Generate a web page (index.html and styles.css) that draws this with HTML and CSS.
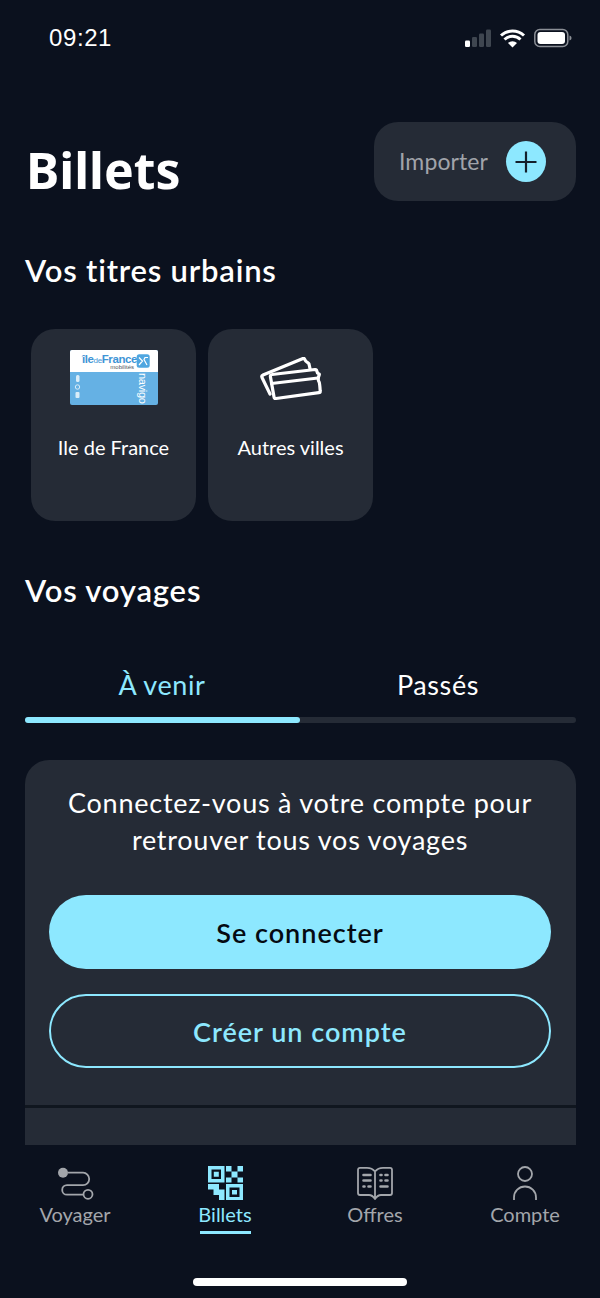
FILE: index.html
```html
<!DOCTYPE html>
<html lang="fr">
<head>
<meta charset="utf-8">
<title>Billets</title>
<link rel="stylesheet" href="styles.css">
</head>
<body>
<div class="screen">
  <div class="status">
    <span class="time">09:21</span>
    <svg class="status-icons" width="110" height="20" viewBox="0 0 110 20">
      <rect x="1" y="12.500" width="5" height="6.500" rx="1.200" fill="#fff"/>
      <rect x="8" y="9" width="5" height="10" rx="1.200" fill="#3f4650"/>
      <rect x="15" y="5.500" width="5" height="13.500" rx="1.200" fill="#3f4650"/>
      <rect x="22" y="1.500" width="5" height="17.500" rx="1.200" fill="#3f4650"/>
      <path d="M37 7.500a17 17 0 0 1 23 0M40.500 11.500a11.500 11.500 0 0 1 16 0" fill="none" stroke="#fff" stroke-width="3"/>
      <path d="M44 15a6.500 6.500 0 0 1 9 0L48.500 19.500z" fill="#fff"/>
      <rect x="70.800" y="1.500" width="33" height="17" rx="5" fill="none" stroke="#8b8f96" stroke-width="1.500"/>
      <rect x="73.500" y="4" width="27.500" height="12" rx="3" fill="#fff"/>
      <path d="M105.500 7.500c1.500.4 2 1.500 2 2.500s-.5 2.100-2 2.500z" fill="#8b8f96"/>
    </svg>
  </div>

  <header class="head">
    <h1 class="title">Billets</h1>
    <div class="import">
      <span class="import-label">Importer</span>
      <span class="plus">
        <svg width="24" height="24" viewBox="0 0 24 24"><path d="M12 1.500v21M1.500 12h21" stroke="#14202c" stroke-width="2.200" fill="none"/></svg>
      </span>
    </div>
  </header>

  <h2 class="section section-urban">Vos titres urbains</h2>

  <div class="cards">
    <div class="card">
      <svg class="card-icon" width="88" height="55" viewBox="0 0 88 55">
        <rect width="88" height="55" rx="2" fill="#65b1e4"/>
        <path d="M0 22V2a2 2 0 0 1 2-2h84a2 2 0 0 1 2 2v20z" fill="#fff"/>
        <text x="12" y="13" class="idf">île<tspan class="idf-de">de</tspan>France</text>
        <text x="64" y="19" class="idf-sub" text-anchor="end">mobilités</text>
        <rect x="66.700" y="4.300" width="13" height="13.400" rx="2.500" fill="#4fa6e0"/>
        <path d="M69 7.500l3.500 3.500-3.500 4M78 7.500h-3l-1 2 3 5.500" stroke="#fff" stroke-width="1.200" fill="none"/>
        <text transform="translate(69 23) rotate(90)" class="navigo">navigo</text>
        <rect x="6" y="25" width="3.500" height="7" rx="1.500" fill="#d9edf9"/>
        <circle cx="7.500" cy="37" r="2.200" fill="none" stroke="#d9edf9"/>
        <rect x="5.500" y="42" width="4" height="6" rx="1" fill="#d9edf9"/>
      </svg>
      <span class="card-label">Ile de France</span>
    </div>
    <div class="card">
      <svg class="card-icon" width="62" height="46" viewBox="0 0 62 46" fill="none" stroke="#fff" stroke-width="3.200" stroke-linejoin="round" stroke-linecap="round">
        <path d="M10 37 2 20.500c-.5-1.200-.2-2 1-2.500L43 1.500c.8-.3 1.400 0 1.700.8.600 1.700 1.500 2.700 2.800 3.200.8.300 1.200.8 1.500 1.500l1.200 5.500"/>
        <path d="M12 17.500 55 12.500c1-.1 1.600.3 1.700 1.200.2 1.500 1 2.600 2 3 .6.200.8.700.5 1.300-.6 1.400-1 2.600-1 4 0 1.200.4 2.200 1 3.300.5 1 .8 6 1 8.700.1 1-.4 1.600-1.400 1.700L16 41.500c-1.200.1-1.900-.4-2-1.600L10.400 19.600c-.1-1.200.4-2 1.600-2.100z"/>
        <path d="M11.500 26.500 58 21"/>
      </svg>
      <span class="card-label">Autres villes</span>
    </div>
  </div>

  <h2 class="section section-trips">Vos voyages</h2>

  <div class="tabs">
    <span class="tab tab-on">À venir</span>
    <span class="tab">Passés</span>
  </div>
  <div class="track"><div class="track-on"></div></div>

  <section class="panel">
    <p class="panel-text">Connectez-vous à votre compte pour<br>retrouver tous vos voyages</p>
    <div class="btn btn-fill">Se connecter</div>
    <div class="btn btn-line">Créer un compte</div>
    <div class="rule"></div>
  </section>

  <nav class="nav">
    <div class="nav-item">
      <svg class="nav-icon" width="38" height="36" viewBox="0 0 38 36" fill="none" stroke="#a3a6ab" stroke-width="1.800">
        <circle cx="7" cy="7.700" r="5" fill="#a3a6ab" stroke="none"/>
        <path d="M12 7.700h15a6.200 6.200 0 0 1 0 12.400H11a4.800 4.800 0 0 0 0 9.600h16"/>
        <circle cx="32" cy="29.300" r="4.500"/>
      </svg>
      <span class="nav-label">Voyager</span>
    </div>
    <div class="nav-item nav-on">
      <svg class="nav-icon" width="35" height="36" viewBox="0 -1 35 36" fill="#8de8ff">
        <path fill-rule="evenodd" d="M0 0h16.500v16.500H0zM3.500 3.500v9.500h9.500V3.500zM5.800 5.800h5v5h-5z"/>
        <path d="M18 0h5.500v5.500H18zM29.500 0H35v5.500h-5.500zM23.500 5.500h6v6h-6zM18 11.500h5.500v5H18zM29.500 11.500H35v5h-5.500z"/>
        <path d="M0 18h5.500v5.500H0zM5.500 18H11v5.500H5.500zM5.500 23.500H11V29H5.500zM11 23.500h5.500V29H11zM11 29h5.500v5H11z"/>
        <path fill-rule="evenodd" d="M18 18h17v16H18zM21.500 21.500V31h10v-9.500zM24 24h5v4.500h-5z"/>
      </svg>
      <span class="nav-label">Billets</span>
      <span class="nav-bar"></span>
    </div>
    <div class="nav-item">
      <svg class="nav-icon" width="36" height="36" viewBox="0 0 36 36" fill="none" stroke="#a3a6ab" stroke-width="1.800" stroke-linejoin="round">
        <path d="M18 6.500c-2-2.500-5-3.700-8-3.700H3C1.800 2.800 1 3.600 1 4.800V28c0 1.200.8 2 2 2h9c2 0 4 1 6 4 2-3 4-4 6-4h9c1.200 0 2-.8 2-2V4.800c0-1.200-.8-2-2-2h-7c-3 0-6 1.200-8 3.700zM18 6.500V33"/>
        <g stroke-width="2.600" stroke-linecap="round">
          <path d="M6.500 10h7M6.500 15.500h7M6.500 21.500h1M11.500 21.500h2M23.500 10h1M28.500 10h2M23.500 15.500h1M28.500 15.500h2M23.500 21.500h7"/>
        </g>
      </svg>
      <span class="nav-label">Offres</span>
    </div>
    <div class="nav-item">
      <svg class="nav-icon" width="26" height="36" viewBox="0 0 26 36" fill="none" stroke="#a3a6ab" stroke-width="1.800">
        <circle cx="13" cy="9" r="7"/>
        <path d="M2 35v-2.500a11 11 0 0 1 22 0V35"/>
      </svg>
      <span class="nav-label">Compte</span>
    </div>
  </nav>
  <div class="home"></div>
</div>
</body>
</html>
```

FILE: styles.css
```css
* { box-sizing: border-box; }
html, body { margin: 0; padding: 0; }
body { background: #0b111e; font-family: "Lato", "Noto Sans", sans-serif; color: #fff; }
.screen { width: 600px; height: 1298px; overflow: hidden; display: flex; flex-direction: column; }
.screen > * { flex: none; }

.status { height: 60px; padding: 24px 26px 0 49px; display: flex; justify-content: space-between; align-items: flex-start; }
.time { font: 400 24px/28px "Liberation Sans", sans-serif; letter-spacing: .6px; }
.status-icons { margin-top: 4px; }

.head { height: 80px; margin-top: 62px; padding: 0 24px 0 26px; display: flex; justify-content: space-between; }
.title { margin: 0; font: 700 50px/60px "Noto Sans", sans-serif; letter-spacing: 0; padding-top: 18px; }
.import { width: 202px; height: 79px; border-radius: 24px; background: #252b36; display: flex; align-items: center; padding-left: 25px; gap: 18px; }
.import-label { font-size: 23px; line-height: 24px; color: #a1a4aa; letter-spacing: .1px; margin-bottom: 2px; }
.plus { width: 40px; height: 41px; border-radius: 50%; background: #8de8ff; display: flex; align-items: center; justify-content: center; }

.section { margin: 0; font-weight: 600; font-size: 31px; line-height: 36px; padding-left: 25px; letter-spacing: .8px; }
.section-urban { margin-top: 50px; }
.section-trips { margin-top: 51px; }

.cards { display: flex; gap: 12px; padding-left: 31px; margin-top: 41px; }
.card { width: 165px; height: 192px; border-radius: 24px; background: #252b36; display: flex; flex-direction: column; align-items: center; }
.card-icon { margin-top: 21px; }
.card:last-child .card-icon { margin-top: 28px; }
.card-label { font-size: 20px; line-height: 24px; }
.card:first-child .card-label { margin-top: 30px; }
.card:last-child .card-label { margin-top: 32px; }

.idf { font: 700 11.500px "Liberation Sans", sans-serif; fill: #3f95d6; letter-spacing: -.4px; }
.idf-de { font-weight: 400; font-size: 8px; }
.idf-sub { font: 400 6px "Liberation Sans", sans-serif; fill: #4b5560; }
.navigo { font: 400 11px "Liberation Sans", sans-serif; fill: #fff; letter-spacing: -.3px; }

.tabs { display: flex; margin-top: 57px; padding: 0 24px; height: 40px; }
.tab { flex: 1; text-align: center; font-size: 27px; line-height: 40px; letter-spacing: .6px; }
.tab-on { color: #8de8ff; }
.track { height: 6px; margin: 12px 24px 0 25px; background: #252b36; border-radius: 3px; }
.track-on { width: 275px; height: 6px; border-radius: 3px; background: #8de8ff; }

.panel { height: 385px; margin: 37px 24px 0 25px; padding: 24px 25px 0 24px; background: #252b36; border-radius: 24px 24px 0 0; display: flex; flex-direction: column; align-items: stretch; }
.panel-text { margin: 0; text-align: center; font-size: 27px; line-height: 37px; letter-spacing: .75px; }
.btn { height: 74px; border-radius: 37px; display: flex; align-items: center; justify-content: center; font-size: 27px; font-weight: 600; letter-spacing: 1px; }
.btn-fill { margin-top: 37px; background: #8de8ff; color: #050a12; }
.btn-line { margin-top: 25px; border: 2px solid #8de8ff; color: #8de8ff; }
.rule { height: 3px; margin: 37px -25px 0 -24px; background: #10161f; }

.nav { display: flex; height: 133px; padding-top: 20px; }
.nav-item { width: 150px; display: flex; flex-direction: column; align-items: center; color: #a3a6ab; }
.nav-icon { flex: none; }
.nav-label { font-size: 20px; line-height: 24px; margin-top: 1px; }
.nav-on { color: #8de8ff; }
.nav-bar { width: 51px; height: 3px; margin-top: 5px; background: #8de8ff; }
.home { width: 214px; height: 8px; margin: 0 auto; border-radius: 4px; background: #fff; }
```
